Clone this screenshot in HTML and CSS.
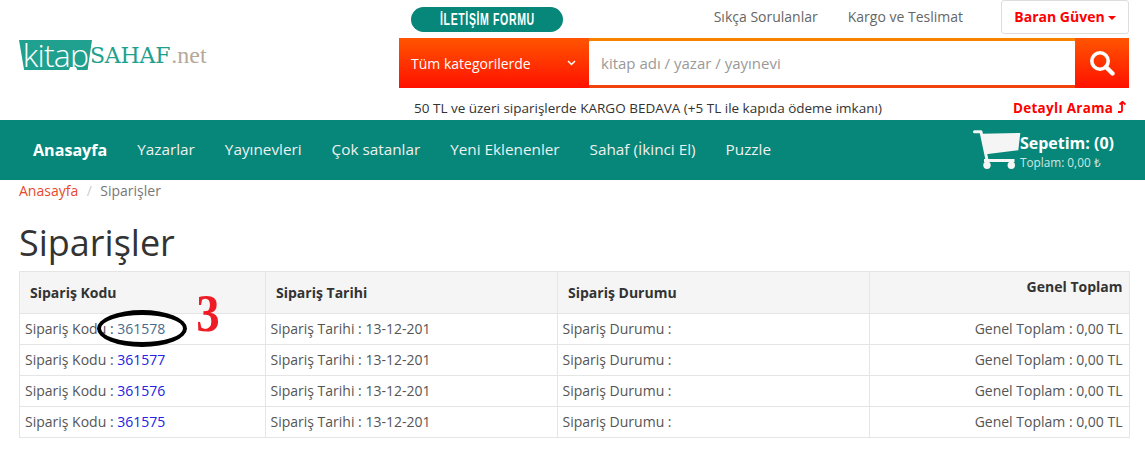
FILE: index.html
```html
<!DOCTYPE html>
<html lang="tr">
<head>
<meta charset="utf-8">
<title>Siparişler</title>
<link rel="stylesheet" href="styles.css">
</head>
<body>
<header class="top">
  <a class="logo" href="#">
    <span class="logo-badge">kitap</span><span class="logo-sahaf">SAHAF</span><span class="logo-net">.net</span>
  </a>
  <div class="top-right">
    <div class="util">
      <a class="pill" href="#"><span class="pill-text">İLETİŞİM FORMU</span></a>
      <nav class="util-links">
        <a href="#">Sıkça Sorulanlar</a>
        <a href="#">Kargo ve Teslimat</a>
      </nav>
      <button class="user-btn">Baran Güven<span class="caret"></span></button>
    </div>
    <form class="search">
      <div class="cat">
        <span>Tüm kategorilerde</span>
        <svg class="chev" width="9" height="6" viewBox="0 0 9 6"><path d="M1 1l3.5 3.5L8 1" fill="none" stroke="#fff" stroke-width="1.5"/></svg>
      </div>
      <div class="query"><span>kitap adı / yazar / yayınevi</span></div>
      <div class="go">
        <svg width="26" height="26" viewBox="0 0 26 26"><circle cx="11" cy="11" r="8.2" fill="none" stroke="#fff" stroke-width="3.6"/><path d="M17 17l6.5 6.5" stroke="#fff" stroke-width="4.4" stroke-linecap="round"/></svg>
      </div>
    </form>
    <div class="promo">
      <span class="promo-text">50 TL ve üzeri siparişlerde KARGO BEDAVA (+5 TL ile kapıda ödeme imkanı)</span>
      <a class="detail" href="#">Detaylı Arama
        <svg width="9" height="12" viewBox="0 0 9 12"><path d="M5 2v7.5Q5 11 3.5 11H1M2.500 3.500L5.500 .8 8.500 3.500" fill="none" stroke="#f00" stroke-width="1.800"/></svg>
      </a>
    </div>
  </div>
</header>

<nav class="main-nav">
  <ul class="menu">
    <li><a class="home" href="#">Anasayfa</a></li>
    <li><a href="#">Yazarlar</a></li>
    <li><a href="#">Yayınevleri</a></li>
    <li><a href="#">Çok satanlar</a></li>
    <li><a href="#">Yeni Eklenenler</a></li>
    <li><a href="#">Sahaf (İkinci El)</a></li>
    <li><a href="#">Puzzle</a></li>
  </ul>
  <div class="cart">
    <svg width="48" height="40" viewBox="0 0 48 40"><path d="M1.500 1.800H8L14 30" fill="none" stroke="#f5f5f5" stroke-width="3" stroke-linecap="round" stroke-linejoin="round"/><path d="M8.500 3.700L47.300 3 45.300 20.300 13 24.300z" fill="#f5f5f5"/><path d="M11 30.500h30.500" stroke="#f5f5f5" stroke-width="3"/><circle cx="14" cy="35.300" r="3.700" fill="#f5f5f5"/><circle cx="38.300" cy="35.300" r="3.700" fill="#f5f5f5"/></svg>
    <div class="cart-text">
      <strong>Sepetim: (0)</strong>
      <small>Toplam: 0,00 ₺</small>
    </div>
  </div>
</nav>

<main class="content">
  <ol class="crumbs">
    <li><a href="#">Anasayfa</a></li>
    <li class="sep">/</li>
    <li>Siparişler</li>
  </ol>
  <h1>Siparişler</h1>
  <div class="table-wrap">
    <table class="orders">
      <colgroup><col class="c1"><col class="c2"><col class="c3"><col class="c4"></colgroup>
      <thead>
        <tr><th>Sipariş Kodu</th><th>Sipariş Tarihi</th><th>Sipariş Durumu</th><th class="total-head">Genel Toplam</th></tr>
      </thead>
      <tbody>
        <tr><td class="code">Sipariş Kodu : <a class="seen" href="#">361578</a></td><td>Sipariş Tarihi : 13-12-201</td><td>Sipariş Durumu :</td><td class="num">Genel Toplam : 0,00 TL</td></tr>
        <tr><td class="code">Sipariş Kodu : <a href="#">361577</a></td><td>Sipariş Tarihi : 13-12-201</td><td>Sipariş Durumu :</td><td class="num">Genel Toplam : 0,00 TL</td></tr>
        <tr><td class="code">Sipariş Kodu : <a href="#">361576</a></td><td>Sipariş Tarihi : 13-12-201</td><td>Sipariş Durumu :</td><td class="num">Genel Toplam : 0,00 TL</td></tr>
        <tr><td class="code">Sipariş Kodu : <a href="#">361575</a></td><td>Sipariş Tarihi : 13-12-201</td><td>Sipariş Durumu :</td><td class="num">Genel Toplam : 0,00 TL</td></tr>
      </tbody>
    </table>
    <span class="mark-ellipse"></span>
    <span class="mark-num">3</span>
  </div>
</main>
</body>
</html>
```
FILE: styles.css
```css
* { box-sizing: border-box; }
html, body { margin: 0; padding: 0; }
body {
  width: 1145px;
  height: 466px;
  overflow: hidden;
  background: #fff;
  color: #555;
  font-family: "Open Sans", sans-serif;
  font-size: 14px;
}
a { text-decoration: none; color: inherit; }

.top {
  height: 120px;
  display: flex;
  padding: 0 16px 0 19px;
}
.logo {
  width: 380px;
  height: 70px;
  padding-top: 40px;
  display: flex;
  align-items: center;
  line-height: 30px;
}
.logo-badge {
  flex: none;
  width: 73px;
  height: 30px;
  background: #20a08e;
  clip-path: polygon(0 0, 100% 0, 94% 100%, 80% 100%, 78% 90%, 70% 90%, 68% 100%, 7% 100%);
  color: #fff;
  font: 300 32px/29px "Open Sans", sans-serif;
  letter-spacing: -.8px;
  text-align: center;
  white-space: nowrap;
}
.logo-sahaf {
  font: 22px/30px "DejaVu Serif", serif;
  color: #20a08e;
  margin-left: -2px;
  letter-spacing: -.2px;
  padding-top: 1px;
}
.logo-net {
  font: 24px/30px "Liberation Serif", serif;
  color: #b5a99a;
  margin-left: 1px;
}

.top-right {
  flex: none;
  width: 730px;
  display: flex;
  flex-direction: column;
}
.util {
  height: 38px;
  display: flex;
  align-items: flex-start;
  padding-left: 12px;
}
.pill {
  width: 152px;
  height: 25px;
  margin-top: 7px;
  border-radius: 12.500px;
  background: #06877a;
  color: #fff;
  display: flex;
  justify-content: center;
  font: 700 17px/26px "Liberation Sans", sans-serif;
  letter-spacing: 1px;
  white-space: nowrap;
}
.pill-text {
  display: inline-block;
  transform: scaleX(.62);
}
.util-links {
  flex: 1;
  display: flex;
  justify-content: flex-end;
  gap: 30px;
  padding-right: 38px;
  line-height: 34px;
  font-size: 14px;
  color: #666;
}
.user-btn {
  width: 128px;
  height: 34px;
  background: #fff;
  border: 1px solid #ddd;
  border-radius: 3px;
  color: #f00;
  font: 700 14px "Open Sans", sans-serif;
  padding: 0 0 2px;
}
.caret {
  display: inline-block;
  margin-left: 3px;
  vertical-align: middle;
  border-top: 4px solid #f00;
  border-left: 4px solid transparent;
  border-right: 4px solid transparent;
}

.search {
  height: 50px;
  display: flex;
  background: linear-gradient(#ff5500, #ff1100);
}
.cat {
  width: 190px;
  display: flex;
  align-items: center;
  justify-content: space-between;
  padding: 0 13px 0 12px;
  color: #fff;
  font-size: 14px;
  font-weight: 400;
}
.query {
  flex: 1;
  margin: 3px 0;
  background: #fff;
  color: #999;
  font-size: 15px;
  line-height: 44px;
  padding-left: 12px;
  box-shadow: 0 -3px 0 #f98100, 0 3px 0 #f2420d;
}
.go {
  width: 54px;
  display: flex;
  align-items: center;
  justify-content: center;
}

.promo {
  flex: 1;
  display: flex;
  justify-content: space-between;
  align-items: center;
  padding: 8px 3px 0 15px;
}
.promo-text { font-size: 13.500px; color: #333; }
.detail {
  color: #f00;
  font-weight: 700;
  font-size: 13.500px;
  letter-spacing: .3px;
}

.main-nav {
  height: 60px;
  background: #06877a;
  display: flex;
  align-items: center;
  justify-content: space-between;
  padding: 0 31px 0 18px;
}
.menu {
  list-style: none;
  margin: 0;
  padding: 0;
  display: flex;
  font-size: 15.300px;
}
.menu li { padding: 0 15px; }
.menu a { color: #f0f0f0; }
.menu .home { color: #fff; font-weight: 700; font-size: 16.100px; }
.cart {
  display: flex;
  align-items: center;
  color: #fff;
}
.cart-text { display: flex; flex-direction: column; margin-left: -1px; padding-top: 2px; }
.cart-text strong { font-size: 16px; line-height: 22px; }
.cart-text small { font-size: 11.800px; color: #cfe6e2; line-height: 16px; }

.content { padding: 0 16px 0 19px; }
.crumbs {
  list-style: none;
  margin: 0;
  padding: 0;
  height: 22px;
  display: flex;
  gap: 8.500px;
  line-height: 22px;
  font-size: 14px;
  color: #777;
}
.crumbs a { color: #e8492c; }
.crumbs .sep { color: #ccc; }
h1 {
  margin: 0;
  padding-top: 18px;
  height: 69px;
  font-size: 36px;
  font-weight: 400;
  line-height: 45px;
  color: #333;
}
.table-wrap { position: relative; }
.orders {
  width: 1110px;
  border-collapse: collapse;
  table-layout: fixed;
  font-size: 14px;
}
.c1 { width: 246px; }
.c2 { width: 292px; }
.c3 { width: 312px; }
.c4 { width: 260px; }
.orders th, .orders td { border: 1px solid #e5e5e5; }
.orders th {
  height: 42px;
  background: #f5f5f5;
  color: #333;
  font-weight: 700;
  text-align: left;
  padding: 0 10px;
  vertical-align: middle;
}
.orders th.total-head { text-align: right; vertical-align: top; padding: 5px 6.500px 0 0; line-height: 20px; }
.orders td { height: 31px; padding: 0 4.500px; line-height: 20px; }
.orders td.code { padding-left: 5px; }
.orders td.num { text-align: right; padding-right: 6.500px; }
.orders a { color: #2222e0; }
.orders a.seen { color: #4a6a8c; }

.mark-ellipse {
  position: absolute;
  left: 78px;
  top: 39px;
  width: 90px;
  height: 37px;
  border-style: solid;
  border-color: #000;
  border-width: 5px 4px;
  border-radius: 50%;
}
.mark-num {
  position: absolute;
  left: 176px;
  top: 11px;
  color: #ee1c25;
  font: 700 52px/64px "Liberation Serif", serif;
  transform: scaleX(.9);
}
```
